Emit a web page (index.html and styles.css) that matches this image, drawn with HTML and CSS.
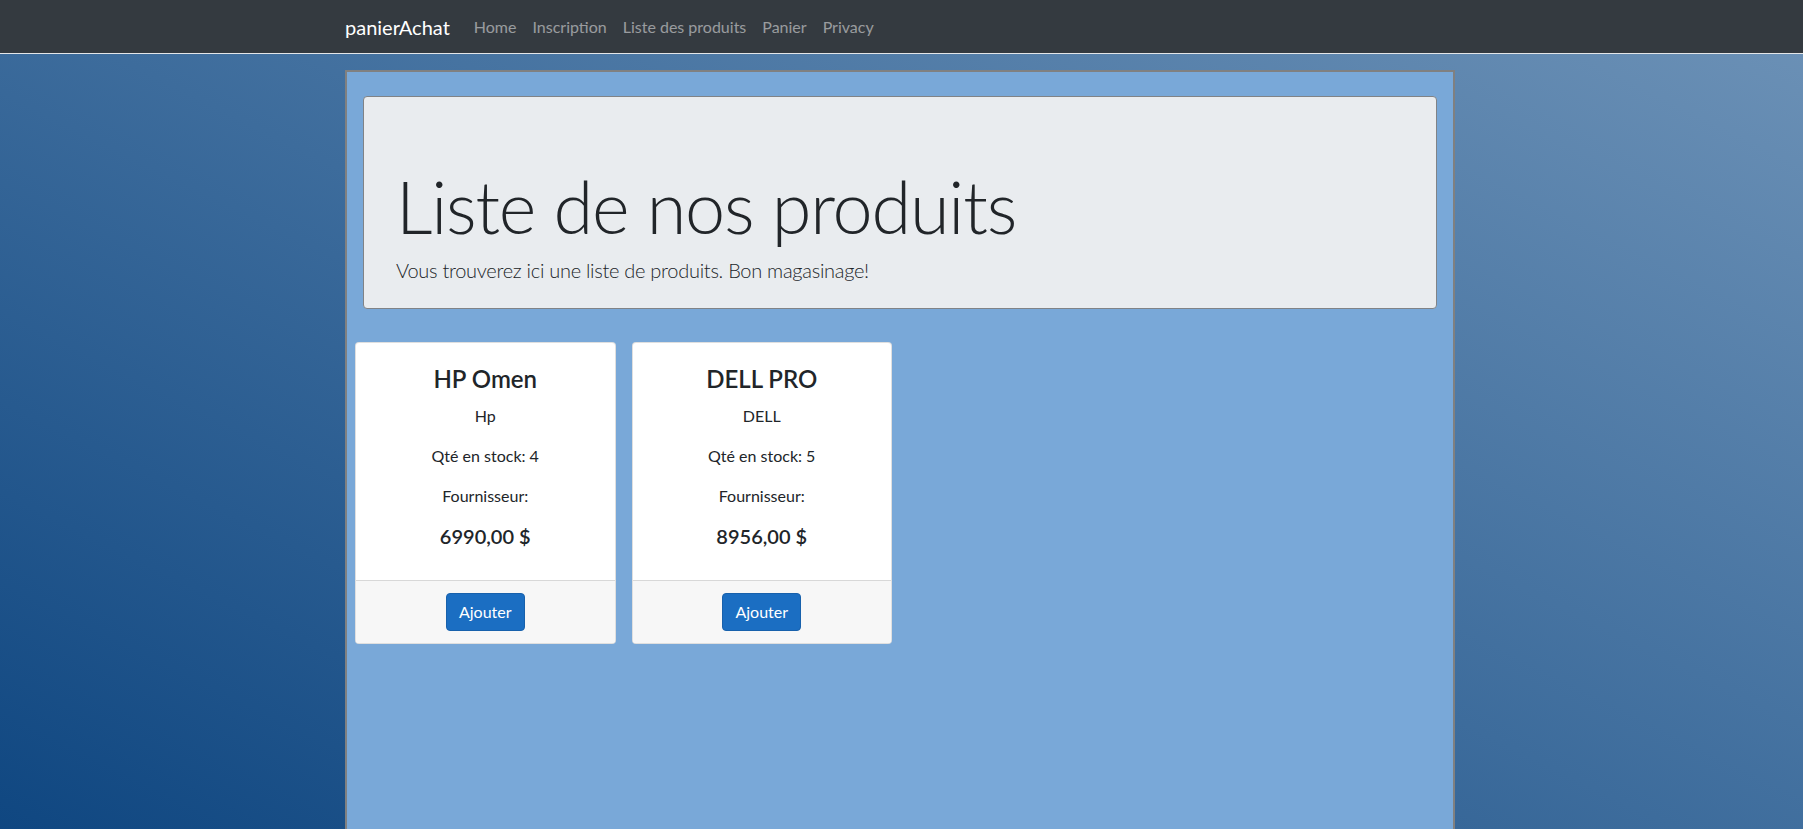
FILE: index.html
```html
<!DOCTYPE html>
<html lang="fr">
<head>
<meta charset="utf-8">
<title>Liste des produits - panierAchat</title>
<link rel="stylesheet" href="styles.css">
</head>
<body>
<header class="navbar">
  <div class="nav-container">
    <a class="brand" href="#">panierAchat</a>
    <ul class="nav-links">
      <li><a href="#">Home</a></li>
      <li><a href="#">Inscription</a></li>
      <li><a href="#">Liste des produits</a></li>
      <li><a href="#">Panier</a></li>
      <li><a href="#">Privacy</a></li>
    </ul>
  </div>
</header>
<main class="page">
  <div class="content-box">
    <section class="jumbotron">
      <h1 class="display-title">Liste de nos produits</h1>
      <p class="lead">Vous trouverez ici une liste de produits. Bon magasinage!</p>
    </section>
    <div class="product-grid">
      <article class="card">
        <div class="card-body">
          <h4 class="card-title">HP Omen</h4>
          <p class="card-text">Hp</p>
          <p class="card-text">Qté en stock: 4</p>
          <p class="card-text">Fournisseur:</p>
          <h5 class="card-price">6990,00 $</h5>
        </div>
        <div class="card-footer">
          <button class="btn-primary" type="button">Ajouter</button>
        </div>
      </article>
      <article class="card">
        <div class="card-body">
          <h4 class="card-title">DELL PRO</h4>
          <p class="card-text">DELL</p>
          <p class="card-text">Qté en stock: 5</p>
          <p class="card-text">Fournisseur:</p>
          <h5 class="card-price">8956,00 $</h5>
        </div>
        <div class="card-footer">
          <button class="btn-primary" type="button">Ajouter</button>
        </div>
      </article>
    </div>
  </div>
</main>
</body>
</html>
```
FILE: styles.css
```css
* {
  box-sizing: border-box;
}

html, body {
  margin: 0;
  padding: 0;
}

body {
  font-family: Lato, "Open Sans", sans-serif;
  font-size: 16px;
  line-height: 1.5;
  color: #212529;
  min-height: 100vh;
  background: linear-gradient(to top right, #0c447f 0%, #3d6c9c 50%, #6d92b7 100%);
  overflow: hidden;
}

.navbar {
  background: #343a40;
  height: 54px;
  border-bottom: 1px solid #e4e6e8;
  padding-right: 3px;
}

.nav-container {
  width: 1110px;
  margin: 0 auto;
  height: 53px;
  display: flex;
  align-items: center;
}

.brand {
  color: #ffffff;
  font-size: 20px;
  line-height: 30px;
  text-decoration: none;
  margin-right: 16px;
  margin-top: 1px;
}

.nav-links {
  list-style: none;
  margin: 0;
  padding: 0;
  display: flex;
}

.nav-links a {
  display: block;
  padding: 0 8px;
  color: rgba(255, 255, 255, 0.5);
  text-decoration: none;
  font-size: 16px;
  line-height: 24px;
}

.page {
  padding-top: 16px;
  padding-right: 3px;
}

.content-box {
  width: 1110px;
  margin: 0 auto;
  min-height: 820px;
  background: #79a8d8;
  border: 2px solid #808080;
  border-bottom: none;
  padding: 24px 0 0;
}

.jumbotron {
  margin: 0 16px 33px;
  background: #e9ecef;
  border: 1px solid #808387;
  border-radius: 4px;
  padding: 66px 32px 23px;
}

.display-title {
  margin: 0 0 6px;
  font-size: 72px;
  line-height: 86px;
  font-weight: 300;
  letter-spacing: -1.2px;
}

.lead {
  margin: 0;
  font-size: 20px;
  line-height: 30px;
  font-weight: 300;
  letter-spacing: -0.28px;
}

.product-grid {
  display: grid;
  grid-template-columns: repeat(4, 1fr);
  column-gap: 16px;
  padding: 0 8px;
}

.card {
  background: #ffffff;
  border: 1px solid rgba(0, 0, 0, 0.125);
  border-radius: 4px;
  overflow: hidden;
}

.card-body {
  text-align: center;
  padding: 20px 20px 20px;
}

.card-title {
  margin: 0 0 10px;
  font-size: 24px;
  line-height: 31px;
  font-weight: 600;
}

.card-text {
  margin: 0 0 16px;
  font-size: 16px;
  line-height: 24px;
  font-weight: 400;
}

.card-price {
  margin: 0 0 12px;
  font-size: 20px;
  line-height: 24px;
  font-weight: 600;
}

.card-footer {
  background: #f7f7f7;
  border-top: 1px solid rgba(0, 0, 0, 0.125);
  padding: 12px 20px;
  text-align: center;
}

.btn-primary {
  font-family: inherit;
  font-size: 16px;
  line-height: 24px;
  color: #ffffff;
  background: #1b6ec2;
  border: 1px solid #1861ac;
  border-radius: 4px;
  padding: 6px 12px;
  cursor: pointer;
}
```
